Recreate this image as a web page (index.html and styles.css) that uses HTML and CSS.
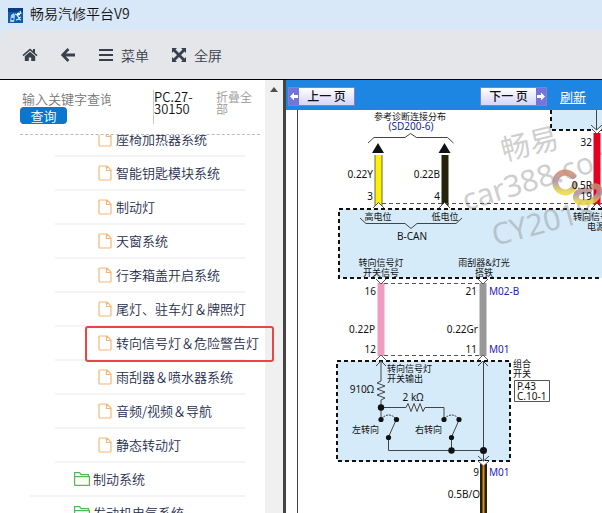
FILE: index.html
```html
<!DOCTYPE html>
<html lang="zh-CN">
<head>
    <meta charset="UTF-8">
    <meta name="viewport" content="width=device-width, initial-scale=1.0">
    <title>畅易汽修平台V9</title>
    <link rel="stylesheet" href="styles.css">
</head>
<body>
    <header class="titlebar">
        <svg class="app-icon" viewBox="0 0 15 15">
            <rect width="15" height="15" fill="#0d5cad"/>
            <rect width="15" height="4" fill="#0a3c80"/>
            <path d="M2 14 3 7l3-2 1 3-1 6z" fill="#a9d2f0"/>
            <path d="M7 6l2 1 2 3 2-1M8 12l3-1 2 1M12 3l1 3" fill="none" stroke="#d9effc" stroke-width="1.300"/>
            <circle cx="10.500" cy="6" r="1.600" fill="#fff"/>
            <path d="M3.500 10h2v2h-2z" fill="#0d5cad"/>
        </svg>
        <h1 class="app-title">畅易汽修平台V9</h1>
    </header>

    <nav class="toolbar">
        <button class="tool" aria-label="首页">
            <svg class="tool-icon" viewBox="0 0 16 16"><path d="M8 1.500.5 8l1 1.200L8 3.600l6.500 5.600 1-1.200L13 5.900V2h-2v2.100zM8 4.700 2.800 9.200V14h4v-3.600h2.400V14h4V9.200z"/></svg>
        </button>
        <button class="tool" aria-label="返回">
            <svg class="tool-icon" viewBox="0 0 16 16"><path d="M7.500 1 9.400 2.900 5.900 6.500H15v3H5.900l3.500 3.600L7.500 15 .8 8z"/></svg>
        </button>
        <button class="tool">
            <svg class="tool-icon" viewBox="0 0 16 16"><path d="M1 2h14v2H1zM1 7h14v2H1zM1 12h14v2H1z"/></svg>
            菜单
        </button>
        <button class="tool">
            <svg class="tool-icon" viewBox="0 0 16 16"><path d="M1 1h5L4.500 2.500 8 6l3.500-3.500L10 1h5v5l-1.500-1.500L10 8l3.500 3.500L15 10v5h-5l1.500-1.500L8 10l-3.500 3.500L6 15H1v-5l1.500 1.500L6 8 2.500 4.500 1 6z"/></svg>
            全屏
        </button>
    </nav>

    <main class="workspace">
        <aside class="sidebar">
            <div class="side-content">
                <form class="search">
                    <div class="search-fields">
                        <input class="search-input" type="text" placeholder="输入关键字查询" aria-label="输入关键字查询">
                        <button class="search-btn" type="button">查询</button>
                    </div>
                    <span class="code">PC.27-30150</span>
                    <a class="collapse" href="#">折叠全部</a>
                </form>
                <ul class="tree">
                    <li class="node leaf"><svg class="file-icon"><use href="#file"/></svg><a href="#">座椅加热器系统</a></li>
                    <li class="node leaf"><svg class="file-icon"><use href="#file"/></svg><a href="#">智能钥匙模块系统</a></li>
                    <li class="node leaf"><svg class="file-icon"><use href="#file"/></svg><a href="#">制动灯</a></li>
                    <li class="node leaf"><svg class="file-icon"><use href="#file"/></svg><a href="#">天窗系统</a></li>
                    <li class="node leaf"><svg class="file-icon"><use href="#file"/></svg><a href="#">行李箱盖开启系统</a></li>
                    <li class="node leaf"><svg class="file-icon"><use href="#file"/></svg><a href="#">尾灯、驻车灯＆牌照灯</a></li>
                    <li class="node leaf marked"><svg class="file-icon"><use href="#file"/></svg><a href="#">转向信号灯＆危险警告灯</a></li>
                    <li class="node leaf"><svg class="file-icon"><use href="#file"/></svg><a href="#">雨刮器＆喷水器系统</a></li>
                    <li class="node leaf"><svg class="file-icon"><use href="#file"/></svg><a href="#">音频/视频＆导航</a></li>
                    <li class="node leaf"><svg class="file-icon"><use href="#file"/></svg><a href="#">静态转动灯</a></li>
                    <li class="node folder"><svg class="folder-icon"><use href="#folder"/></svg><a href="#">制动系统</a></li>
                    <li class="node folder"><svg class="folder-icon"><use href="#folder"/></svg><a href="#">发动机电气系统</a></li>
                </ul>
            </div>
            <div class="scrollbar">
                <svg class="scroll-up" viewBox="0 0 8 5"><path d="M0 5 4 0l4 5z"/></svg>
            </div>
        </aside>

        <section class="viewer">
            <div class="pager">
                <button class="page-btn prev"><svg class="page-arrow" viewBox="0 0 10 16"><path d="M1 8 5 4v2.500h4v3H5V12z"/></svg><span class="page-text">上一 页</span></button>
                <button class="page-btn next"><span class="page-text">下一 页</span><svg class="page-arrow" viewBox="0 0 10 16"><path d="M9 8 5 4v2.500H1v3h4V12z"/></svg></button>
                <a class="refresh" href="#">刷新</a>
            </div>
            <div class="sheet">
                <svg class="diagram" width="316" height="403" viewBox="286 110 316 403">
                    <defs>
                        <linearGradient id="ring" x1="0" y1="0" x2="0" y2="1">
                            <stop offset="0" stop-color="#d08a6c"/>
                            <stop offset=".45" stop-color="#a68fa6"/>
                            <stop offset="1" stop-color="#ecd93c"/>
                        </linearGradient>
                    </defs>
                    <path class="wire" d="M297.500 110v403"/>

                    <!-- control module boxes -->
                    <path class="fill" d="M551 110h51v20h-51z"/>
                    <path class="box" d="M551 110v20h51"/>
                    <path class="fill" d="M339 209h263v69H339z"/>
                    <path class="box" d="M602 209H339v69h263"/>
                    <path class="fill box" d="M337 361h173v100H337z"/>

                    <!-- watermark -->
                    <g class="watermark">
                        <text class="mark-name" transform="translate(504 161) rotate(-14)">畅易</text>
                        <text class="mark-site" transform="translate(466 211) rotate(-17)">car388.com</text>
                        <text class="mark-site" transform="translate(495 246) rotate(-15)">CY2018</text>
                    </g>

                    <!-- coloured wires -->
                    <path class="cable" stroke="#fff000" d="M378.500 155v51"/>
                    <path class="edge" d="M375 155v51M382 155v51"/>
                    <path class="cable black" d="M445 155v51"/>
                    <path class="cable red" d="M597 133v72"/>
                    <path class="cable pink" d="M381 283v73"/>
                    <path class="cable gray" d="M483 283v73"/>
                    <path class="cable black" d="M483.500 464v49"/>
                    <path class="stripe" d="M483.500 464v49"/>

                    <!-- connector dashes -->
                    <path class="dash" d="M382 203.500h220M384 283.500h96M384 355.500h96"/>

                    <!-- top branch -->
                    <path class="wire" d="M368 143l6-5.500h31l5.500-4 6 4h31l6 5.500M360 218l6 5.500h39l6 5 6-5h39l6-5.500"/>
                    <path class="solid" d="M378 143l6 10h-12zM444.500 143l6 10h-12z"/>

                    <!-- connector ends -->
                    <path class="joint" d="M373 208l5.500-5.500 5.500 5.500M439 208l5.500-5.500 5.500 5.500M376 279l5 5 5-5M478 279l5 5 5-5M376 360l5-5 5 5M478 360l5-5 5 5M478 461l5.500 5 5.500-5M592 129l5 5 5-5M592 208l5-5 5 5"/>
                    <path class="wire" d="M376 366l5-5 5 5M478 366l5-5 5 5M478 456l5.500 5 5.500-5M591 125l5.500 5 5.500-5M596.500 110v20"/>

                    <!-- switch circuit -->
                    <path class="wire" d="M381 361v20l-4 2 8 3-8 3 8 3-8 3 8 3-4 2v21M381 407.500h25l2-4 3 8 3-8 3 8 3-8 3 8 2-4h19v12M483.500 361v100M388.500 437v13.500h95M451.500 437v13.500M388.500 437l8-18M451.500 437l8-18"/>
                    <path class="arc" d="M381 419q8-8 15 0M444 419q8-8 15 0"/>
                    <g class="solid">
                        <circle cx="381" cy="407.500" r="3.200"/>
                        <circle cx="451.500" cy="450.500" r="3.200"/>
                        <circle cx="483.500" cy="450.500" r="3.500"/>
                        <circle cx="381" cy="419.500" r="2.600"/>
                        <circle cx="396.500" cy="419.500" r="2.600"/>
                        <circle cx="388.500" cy="437.500" r="2.600"/>
                        <circle cx="444" cy="419.500" r="2.600"/>
                        <circle cx="459" cy="419.500" r="2.600"/>
                        <circle cx="451.500" cy="437.500" r="2.600"/>
                    </g>

                    <g class="ring">
                        <path d="M573 176a10 10 0 1 0 2 9"/>
                        <path d="M592 187c7-3 10 4 5 10s-20 8-21 1 8-8 13-7"/>
                    </g>

                    <g class="labels">
                        <text class="mid zh" x="410" y="120">参考诊断连接分布</text>
                        <text class="mid ref" x="411" y="130">(SD200-6)</text>
                        <text class="end" x="373" y="178">0.22Y</text>
                        <text class="end" x="373" y="200">3</text>
                        <text class="end" x="440" y="178">0.22B</text>
                        <text class="end" x="440" y="200">4</text>
                        <text class="mid zh" x="378" y="220">高电位</text>
                        <text class="mid zh" x="445" y="220">低电位</text>
                        <text class="mid" x="412" y="240">B-CAN</text>
                        <text class="end" x="592" y="146">32</text>
                        <text class="end" x="592" y="189">0.5R</text>
                        <text class="end" x="592" y="200">19</text>
                        <text class="zh" x="573" y="220">转向信号灯</text>
                        <text class="zh" x="587" y="230">电源</text>
                        <text class="mid zh" x="381" y="266">转向信号灯</text>
                        <text class="mid zh" x="381" y="276">开关信号</text>
                        <text class="mid zh" x="484" y="266">雨刮器&amp;灯光</text>
                        <text class="mid zh" x="484" y="276">搭铁</text>
                        <text class="end" x="376" y="295">16</text>
                        <text class="end" x="477" y="295">21</text>
                        <text class="ref" x="489" y="295">M02-B</text>
                        <text class="end" x="375" y="333">0.22P</text>
                        <text class="end" x="478" y="333">0.22Gr</text>
                        <text class="end" x="376" y="353">12</text>
                        <text class="end" x="477" y="353">11</text>
                        <text class="ref" x="489" y="353">M01</text>
                        <text class="zh" x="387" y="372">转向信号灯</text>
                        <text class="zh" x="387" y="382">开关输出</text>
                        <text class="end" x="374" y="393">910Ω</text>
                        <text class="mid" x="413" y="401">2 kΩ</text>
                        <text class="zh" x="352" y="433">左转向</text>
                        <text class="zh" x="415" y="433">右转向</text>
                        <text class="zh" x="513" y="367">组合</text>
                        <text class="zh" x="513" y="377">开关</text>
                        <path class="frame" d="M514.500 380.500h35v21h-35z"/>
                        <text x="517" y="390">P.43</text>
                        <text x="517" y="400">C.10-1</text>
                        <text class="end" x="479" y="476">9</text>
                        <text class="ref" x="489" y="476">M01</text>
                        <text class="end" x="480" y="498">0.5B/O</text>
                    </g>
                </svg>
            </div>
        </section>
    </main>

    <svg class="symbols">
        <symbol id="file" viewBox="0 0 14 16"><path d="M2 1h7l4 4v9a1 1 0 0 1-1 1H2a1 1 0 0 1-1-1V2a1 1 0 0 1 1-1zM8.500 1v4.500H13" fill="none" stroke="#f4b678" stroke-width="1.200"/></symbol>
        <symbol id="folder" viewBox="0 0 16 14"><path d="M.6 13.400V.6h5l1.500 2h7.300v2M.6 4.600h14.800v8.800H.6" fill="none" stroke="#55b955" stroke-width="1.200"/></symbol>
    </svg>
</body>
</html>
```

FILE: styles.css
```css
*,
*::after {
    box-sizing: border-box;
}

body {
    display: flex;
    flex-direction: column;
    height: 100vh;
    margin: 0;
    overflow: hidden;
    background-color: #d9e8f8;
    font-family: "Noto Sans CJK SC", sans-serif;
    font-size: 13px;
    font-weight: 350;
}

button {
    border: none;
    padding: 0;
    background: none;
    font: inherit;
    cursor: pointer;
}

.titlebar {
    display: flex;
    align-items: center;
    gap: 7px;
    height: 30px;
    padding: 0 8px;
}

.app-icon {
    width: 15px;
    height: 15px;
}

.app-title {
    align-self: flex-start;
    margin: 0;
    color: #111;
    font-size: 14px;
    font-weight: 350;
    line-height: 26px;
}

.toolbar {
    display: flex;
    align-items: center;
    gap: 22px;
    height: 50px;
    padding: 0 22px;
    border-bottom: 1px solid #000;
    border-top-left-radius: 8px;
    background-color: #e5e6ea;
}

.tool {
    display: flex;
    align-items: center;
    gap: 7px;
    color: #38404c;
    font-size: 14px;
}

.tool-icon {
    width: 16px;
    height: 16px;
    fill: #38404c;
}

.workspace {
    display: flex;
    flex: 1;
    min-height: 0;
    background-color: #fff;
}

.sidebar {
    display: flex;
    flex: 0 0 283px;
    min-width: 0;
    min-height: 0;
}

.side-content {
    display: flex;
    flex: 1;
    flex-direction: column;
    min-width: 0;
}

.search {
    display: flex;
    flex: none;
    height: 55px;
    margin: 0 5px 0 20px;
    padding-top: 10px;
    border-bottom: 1px dashed #bbb;
}

.search-fields {
    width: 133px;
}

.search-input {
    display: block;
    width: 93px;
    height: 17px;
    padding: 0 2px;
    border: none;
    outline: none;
    font: inherit;
}

.search-input::placeholder {
    color: #757575;
}

.search-btn {
    display: block;
    width: 47px;
    height: 17px;
    border-radius: 4px;
    background-color: #0a76cd;
    color: #fff;
    line-height: 17px;
}

.code {
    width: 63px;
    height: 34px;
    padding-top: 1px;
    border-left: 1px solid #ccc;
    color: #111;
    line-height: 12px;
}

.collapse {
    width: 40px;
    padding-top: 1px;
    color: #999;
    font-size: 12px;
    line-height: 12px;
    text-decoration: none;
}

.tree {
    display: flex;
    flex: 1;
    flex-direction: column;
    justify-content: flex-end;
    min-height: 0;
    margin: 0 0 -18px;
    padding: 0;
    overflow-x: visible;
    overflow-y: clip;
    list-style: none;
}

.node {
    display: flex;
    flex: none;
    align-items: center;
    height: 34px;
    margin-right: 20px;
    border-bottom: 2px solid #f3f4f5;
    white-space: nowrap;
}

.node a {
    color: #1f2d4d;
    line-height: 18px;
    text-decoration: none;
}

.leaf {
    gap: 4px;
    margin-left: 55px;
    padding-left: 43px;
}

.folder {
    gap: 3px;
    margin-left: 30px;
    padding-left: 44px;
}

.file-icon {
    flex: none;
    width: 14px;
    height: 16px;
}

.folder-icon {
    flex: none;
    width: 16px;
    height: 14px;
}

.marked {
    position: relative;
}

/* red outline reaches over the scrollbar */
.marked::after {
    position: absolute;
    z-index: 1;
    top: -1px;
    left: 30px;
    width: 189px;
    height: 36px;
    border: 2px solid #e84545;
    border-radius: 3px;
    content: "";
    pointer-events: none;
}

.scrollbar {
    display: flex;
    flex: 0 0 18px;
    justify-content: center;
    padding-top: 7px;
    background-color: #f0f0f0;
}

.scroll-up {
    width: 8px;
    height: 5px;
    fill: #505050;
}

.viewer {
    display: flex;
    flex: 1;
    flex-direction: column;
    min-width: 0;
    border-left: 3px solid #444;
}

.pager {
    display: flex;
    flex: none;
    align-items: center;
    height: 30px;
    padding: 2px 2px 0;
    background-color: #1c86e2;
}

.page-btn {
    display: flex;
    width: 67px;
    height: 19px;
    border: 1px solid #8080d0;
    background: linear-gradient(#fff, #d4d4fa);
    color: #111;
    font-size: 12px;
    font-weight: 500;
}

.page-arrow {
    width: 10px;
    height: 17px;
    background-color: #7474da;
    fill: #fff;
}

.page-text {
    flex: 1;
    line-height: 16px;
}

.next {
    margin-left: 125px;
}

.refresh {
    margin-left: 13px;
    color: #fff;
    font-weight: 400;
}

.sheet {
    flex: 1;
    min-height: 0;
    overflow: hidden;
}

.diagram {
    display: block;
}

.symbols {
    display: none;
}

.fill {
    fill: #d5ebf9;
}

.box {
    stroke: #111;
    stroke-width: 2;
    stroke-dasharray: 4 3;
}

.box:not(.fill) {
    fill: none;
}

.wire {
    fill: none;
    stroke: #444;
}

.cable {
    stroke-width: 7;
}

.black {
    stroke: #24220c;
}

.red {
    stroke: #e60020;
}

.pink {
    stroke: #ee9dc0;
}

.gray {
    stroke: #999;
}

.stripe {
    stroke: #e08a1c;
    stroke-width: 2;
}

.edge {
    stroke: #665;
}

.dash {
    stroke: #555;
    stroke-dasharray: 4 3;
}

.arc {
    fill: none;
    stroke: #333;
    stroke-dasharray: 2 1;
}

.joint {
    fill: #fff;
    stroke: #555;
}

.solid {
    fill: #111;
}

.ring {
    fill: none;
    stroke: url(#ring);
    stroke-linecap: round;
    stroke-width: 6;
    opacity: .85;
}

.frame {
    fill: #fff;
    stroke: #555;
}

.labels {
    fill: #111;
    font-family: "Noto Sans", "Noto Sans CJK SC", sans-serif;
    font-size: 10px;
    font-weight: 400;
}

.zh {
    font-size: 9px;
}

.mid {
    text-anchor: middle;
}

.end {
    text-anchor: end;
}

.ref {
    fill: #2222b4;
}

.watermark {
    fill: #888;
    font-family: "Noto Sans", "Noto Sans CJK SC", sans-serif;
    font-weight: 400;
    opacity: .4;
}

.mark-name {
    font-size: 29px;
}

.mark-site {
    font-size: 30px;
}
```
